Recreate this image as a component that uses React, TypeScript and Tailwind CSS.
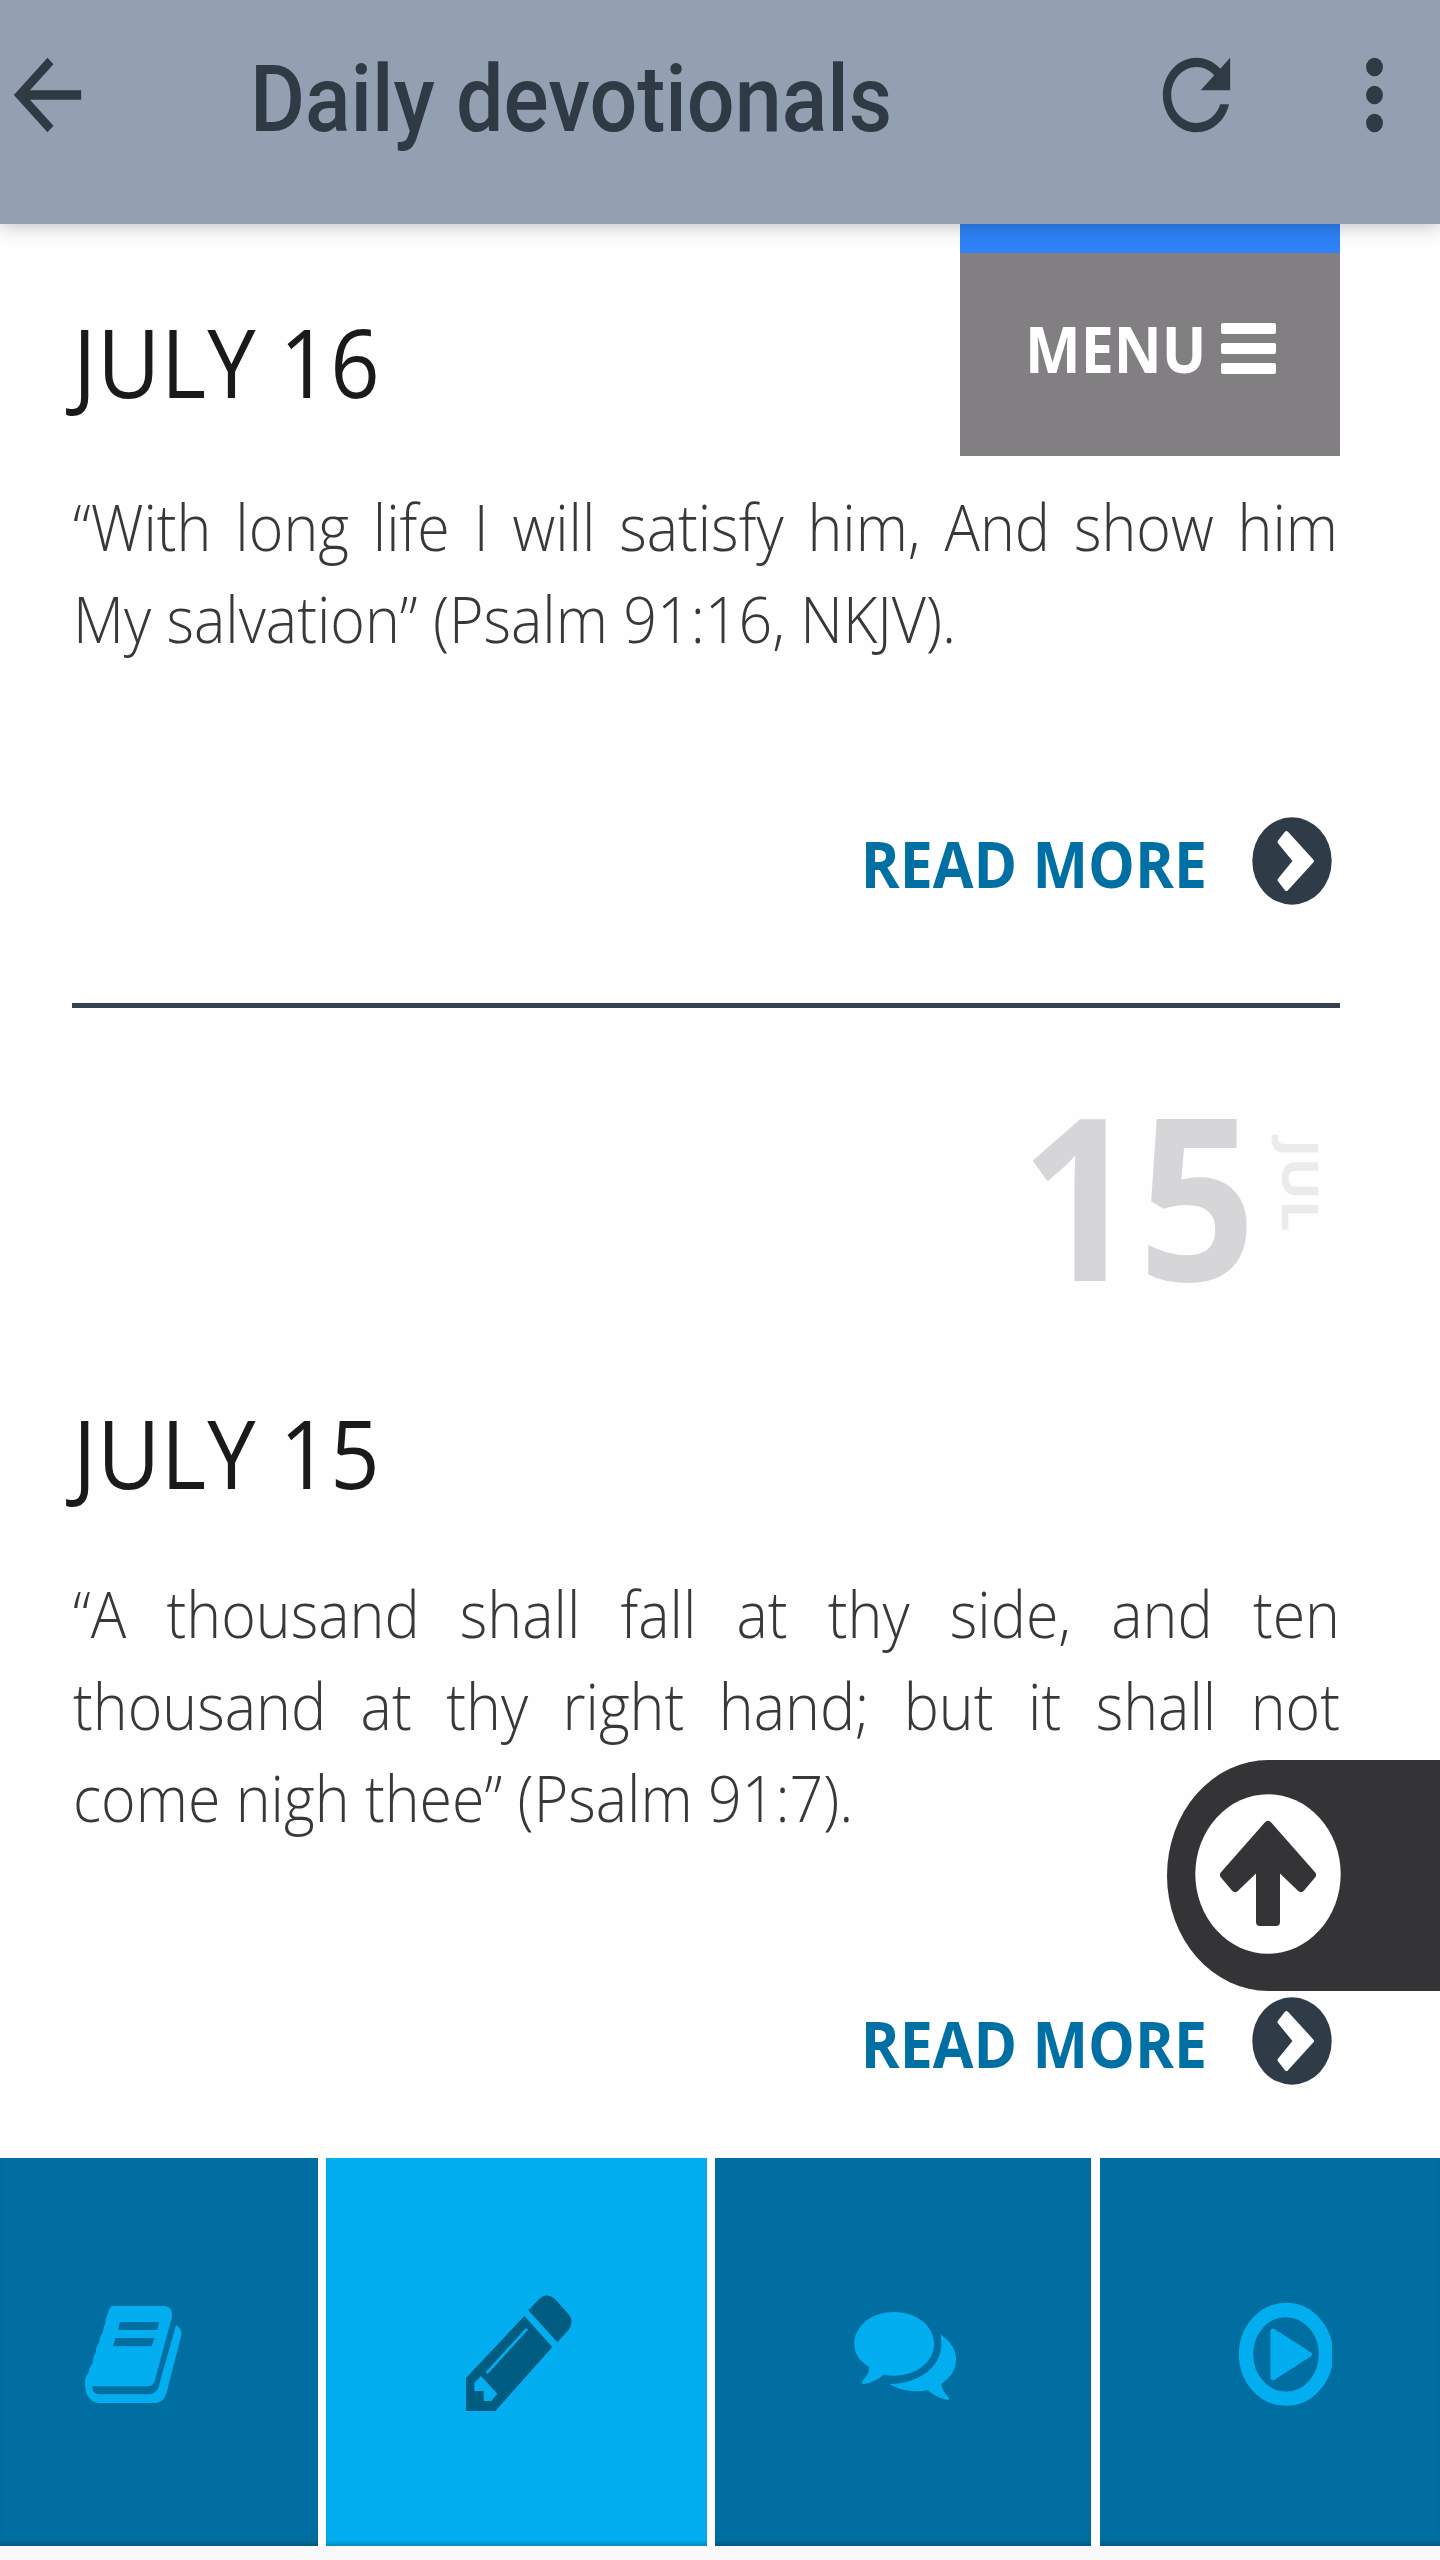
function ReadMore() {
  return (
    <div className="flex h-[88px] items-center justify-end pr-2">
      <span className="mt-[5px] origin-center scale-y-110 text-[59px] leading-none font-bold text-[#006fa3]">READ MORE</span>
      <svg className="ml-[45px] h-[88px] w-20 shrink-0" viewBox="0 0 80 88">
        <ellipse cx="40" cy="44" rx="39.7" ry="43.7" fill="#2f3c47" />
        <path d="M60 44 L34.5 16 L27.5 25 L43 44 L27.5 63 L34.5 72 Z" fill="#fff" stroke="#fff" strokeWidth="4" strokeLinejoin="round" />
      </svg>
    </div>
  );
}

function Header() {
  return (
    <header className="relative z-10 flex h-56 items-start bg-[#93a0b1] text-[#2f3a45] shadow-[0_2px_18px_rgba(0,0,0,0.25)]">
      <svg className="mt-[39px] -ml-[3px] h-[112px] w-[101px]" viewBox="0 0 24 24" preserveAspectRatio="none" fill="currentColor">
        <path d="M20 11H7.83l5.59-5.59L12 4l-8 8 8 8 1.41-1.41L7.83 13H20v-2z" />
      </svg>
      <h1 className='mt-[46px] ml-[152px] flex-1 origin-top scale-y-110 font-["Roboto",sans-serif] text-[84.4px] leading-[98px] font-medium whitespace-nowrap'>
        Daily devotionals
      </h1>
      <svg className="mt-[39px] h-[112px] w-[101px]" viewBox="0 0 24 24" preserveAspectRatio="none" fill="currentColor">
        <path d="M17.65 6.35C16.2 4.9 14.21 4 12 4c-4.42 0-7.99 3.58-7.99 8s3.57 8 7.99 8c3.73 0 6.84-2.55 7.73-6h-2.08c-.82 2.33-3.04 4-5.65 4-3.31 0-6-2.69-6-6s2.69-6 6-6c1.66 0 3.14.69 4.22 1.78L13 11h7V4l-2.35 2.35z" />
      </svg>
      <svg className="mt-[39px] mr-[15px] ml-[77px] h-[112px] w-[101px]" viewBox="0 0 24 24" preserveAspectRatio="none" fill="currentColor">
        <circle cx="12" cy="6" r="2" />
        <circle cx="12" cy="12" r="2" />
        <circle cx="12" cy="18" r="2" />
      </svg>
    </header>
  );
}

function BookIcon() {
  return (
    <svg className="mt-[127px] ml-[70px] h-[130px] w-[130px]" viewBox="0 0 390 390">
      <path
        fill="#02aef0"
        d="M125 63 H285 Q308 65 306 95 L255 285 Q250 303 235 304 H67 C66 320 75 328 90 328 H238 Q258 326 265 308 L318 120 Q337 130 333 155 L290 322 Q282 352 258 354 H85 C58 350 44 328 45 290 Q46 272 55 265 Q58 245 68 235 Q68 215 77 203 Q78 183 88 172 Q88 155 98 143 Q100 125 106 115 Q106 100 112 90 Q116 72 125 63 Z"
      />
      <path fill="#006ea1" d="M150 111 H267 L262 135 H144 Z M136 159 H253 L245 184 H129 Z" />
    </svg>
  );
}

function PencilIcon() {
  return (
    <svg className="mt-[127px] ml-[129px] h-[130px] w-[130px]" viewBox="0 0 390 390">
      <path
        fill="#005c80"
        d="M220 76 L253 41 Q275 20 299 41 L338 84 Q360 109 340 136 L307 172 Z M208 93 L292 186 L121 378 H33 V279 Z"
      />
      <path d="M214 134 L97 262" stroke="#02aef0" strokeWidth="8" strokeLinecap="round" />
      <path fill="#02aef0" d="M78 273 L127 326 L109 348 H86 V318 H58 V293 Z" />
    </svg>
  );
}

function CommentsIcon() {
  return (
    <svg className="mt-[127px] ml-[130px] h-[130px] w-[120px]" viewBox="0 0 360 390">
      <g fill="#02aef0">
        <path d="M147 81 C214 81 267 122 267 177 C267 231 214 272 147 272 Q132 272 116 269 Q88 293 55 297 Q47 295 54 285 Q73 268 73 246 C43 229 28 205 28 177 C28 122 81 81 147 81 Z" />
        <path d="M287 149 C317 168 333 193 333 223 C333 253 318 279 289 296 Q291 317 310 335 Q315 344 307 345 Q272 338 249 316 C206 324 166 316 133 297 C220 296 289 248 289 177 Q289 162 287 149 Z" />
      </g>
    </svg>
  );
}

function PlayIcon() {
  return (
    <svg className="mt-[127px] ml-[135.5px] h-[130px] w-[97px]" viewBox="0 0 291 390">
      <ellipse cx="153" cy="208" rx="120" ry="133" fill="none" stroke="#02aef0" strokeWidth="43" />
      <path d="M114 138 L223 208 L114 278 Z" fill="#02aef0" stroke="#02aef0" strokeWidth="15" strokeLinejoin="round" />
    </svg>
  );
}

export default function App() {
  return (
    <div className='relative flex h-[2560px] w-[1440px] flex-col overflow-hidden bg-[#fefefe] font-["Open_Sans",sans-serif]'>
      <Header />
      <main className="flex h-[1934px] flex-col pr-[100px] pl-[72px]">
        <div className="flex h-[232px] justify-between">
          <h2 className="mt-[73px] ml-px h-[118px] origin-top scale-y-110 text-[86.5px] leading-[118px] tracking-[0.9px] whitespace-nowrap text-[#1a1a1c]">JULY 16</h2>
          <div className="flex h-[232px] w-[380px] flex-col">
            <div className="h-[28.5px] bg-[#2f82f7]" />
            <div className="flex flex-1 items-start bg-[#827f82] pl-[65px]">
              <span className="mt-[51px] origin-top scale-y-110 text-[59px] leading-[80px] font-bold text-white">MENU</span>
              <div className="mt-[70px] ml-[15px] flex w-[55px] flex-col gap-[9px]">
                <div className="h-[11px] rounded-xs bg-white" />
                <div className="h-[11px] rounded-xs bg-white" />
                <div className="h-[11px] rounded-xs bg-white" />
              </div>
            </div>
          </div>
        </div>
        <p className="mt-[23px] ml-px h-[338px] w-[1265px] text-[#38383a]">
          <span className="block origin-top scale-y-110 text-justify text-[59.1px] leading-[84px] font-light">
            “With long life I will satisfy him, And show him My salvation” (Psalm 91:16, NKJV).
          </span>
        </p>
        <ReadMore />
        <div className="mt-[98px] h-[5px] w-[1268px] bg-[#35424d]" />
        <div className="mt-[31px] flex h-[333px] items-start justify-end">
          <span className="origin-top scale-y-110 text-[206px] leading-[280px] font-bold text-[#d6d6d8]">15</span>
          <span className="mt-[100px] mr-[2px] ml-[10px] h-[106px] w-[72px] origin-top scale-y-110 text-[51px] leading-[72px] font-bold text-[#ebebed] [writing-mode:vertical-rl]">JUL</span>
        </div>
        <h2 className="mt-[16px] ml-px h-[118px] origin-top scale-y-110 text-[86.5px] leading-[118px] tracking-[0.9px] text-[#1a1a1c]">JULY 15</h2>
        <p className="mt-[60px] ml-px h-[431px] w-[1267px] text-[#38383a]">
          <span className="block origin-top scale-y-110 text-justify text-[59.1px] leading-[84px] font-light">
            “A thousand shall fall at thy side, and ten thousand at thy right hand; but it shall not come nigh thee” (Psalm 91:7).
          </span>
        </p>
        <ReadMore />
      </main>
      <button className="absolute top-[1760px] right-0 flex h-[231px] w-[273px] items-start rounded-l-[102px_116px] bg-[#343336] pt-[34px] pl-[28px]">
        <svg className="h-[160px] w-[146px]" viewBox="0 0 146 160">
          <ellipse cx="73" cy="80" rx="72.7" ry="79.7" fill="#fff" />
          <path d="M73 31 L117 81 L106 94 L81 70 V128 H65 V70 L40 94 L29 81 Z" fill="#343336" stroke="#343336" strokeWidth="8" strokeLinejoin="round" />
        </svg>
      </button>
      <nav className="flex h-[388px] gap-[8.5px] bg-white">
        <div className="w-[317.5px] bg-[#006ea1] shadow-[inset_0_-5px_4px_-2px_rgba(0,0,0,0.2)]">
          <BookIcon />
        </div>
        <div className="w-[380.5px] bg-[#02aef0] shadow-[inset_0_-5px_4px_-2px_rgba(0,0,0,0.2)]">
          <PencilIcon />
        </div>
        <div className="w-[376px] bg-[#006ea1] shadow-[inset_0_-5px_4px_-2px_rgba(0,0,0,0.2)]">
          <CommentsIcon />
        </div>
        <div className="flex-1 bg-[#006ea1] shadow-[inset_0_-5px_4px_-2px_rgba(0,0,0,0.2)]">
          <PlayIcon />
        </div>
      </nav>
      <div className="flex-1 bg-[#f9f8fb]" />
    </div>
  );
}
